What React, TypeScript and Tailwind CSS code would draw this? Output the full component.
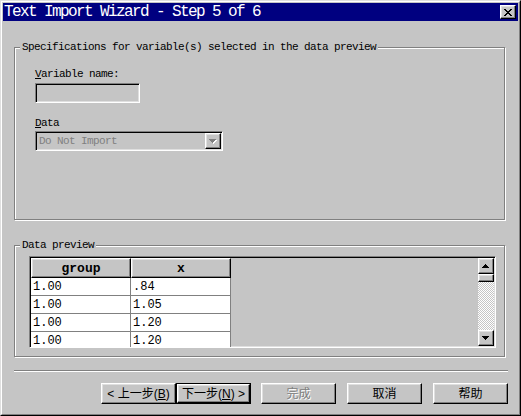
import React from "react";

const mono = "font-['Liberation_Mono',monospace]";
const cjk = "font-['Liberation_Sans','Noto_Sans_CJK_SC',sans-serif]";
const raised =
  "border border-t-white border-l-white border-r-black border-b-black shadow-[inset_-1px_-1px_0_#808080,inset_1px_1px_0_#dfdfdf]";
const sunken =
  "border border-t-[#808080] border-l-[#808080] border-r-white border-b-white shadow-[inset_1px_1px_0_#000,inset_-1px_-1px_0_#dfdfdf]";
const etched = "border border-[#808080] shadow-[1px_1px_0_#fff,inset_1px_1px_0_#fff]";

const rows = [
  ["1.00", ".84"],
  ["1.00", "1.05"],
  ["1.00", "1.20"],
  ["1.00", "1.20"],
];

function Legend({ text }: { text: string }) {
  // group box caption sitting over the etched line
  return (
    <span
      className={`${mono} absolute left-[5px] -top-[7px] px-[2px] bg-[#c5c5c5] text-[11px] leading-[12px] tracking-[-0.6px] text-black whitespace-nowrap`}
    >
      {text}
    </span>
  );
}

function Arrow({ up, disabled }: { up?: boolean; disabled?: boolean }) {
  const pts = up ? "3.5,0 7,4 0,4" : "0,0 7,0 3.5,4";
  return (
    <svg width="8" height="5" viewBox="0 0 8 5" shapeRendering="crispEdges">
      {disabled && <polygon points={pts} fill="#fff" transform="translate(1,1)" />}
      <polygon points={pts} fill={disabled ? "#808080" : "#000"} />
    </svg>
  );
}

function Btn({
  children,
  disabled,
  isDefault,
  className = "",
}: {
  children: React.ReactNode;
  disabled?: boolean;
  isDefault?: boolean;
  className?: string;
}) {
  const label = (
    <span
      className={`${cjk} text-[12px] leading-none ${
        disabled ? "text-[#808080] [text-shadow:1px_1px_0_#fff]" : "text-black"
      }`}
    >
      {children}
    </span>
  );
  if (isDefault) {
    return (
      <div className={`w-[75px] h-[21px] border border-black ${className}`}>
        <div className={`h-full flex items-center justify-center ${raised}`}>{label}</div>
      </div>
    );
  }
  return (
    <div className={`w-[75px] h-[21px] flex items-center justify-center ${raised} ${className}`}>
      {label}
    </div>
  );
}

export default function App() {
  return (
    <div className="w-[521px] h-[416px] bg-[#c5c5c5] border border-t-[#dfdfdf] border-l-[#dfdfdf] border-r-black border-b-black">
      <div className="h-full flex flex-col p-px border border-t-white border-l-white border-r-[#808080] border-b-[#808080]">
        {/* title bar */}
        <div className="h-[18px] shrink-0 bg-[#000080] flex items-center justify-between pl-px pr-[2px]">
          <span className={`${mono} text-white text-[16px] leading-none tracking-[-1.6px] whitespace-nowrap`}>
            Text Import Wizard - Step 5 of 6
          </span>
          <div className={`w-[16px] h-[14px] flex items-center justify-center bg-[#c5c5c5] ${raised}`}>
            <svg width="8" height="7" viewBox="0 0 8 7" shapeRendering="crispEdges">
              <path
                fill="#000"
                d="M0 0h2v1H0zM6 0h2v1H6zM1 1h2v1H1zM5 1h2v1H5zM2 2h4v1H2zM3 3h2v1H3zM2 4h4v1H2zM1 5h2v1H1zM5 5h2v1H5zM0 6h2v1H0zM6 6h2v1H6z"
              />
            </svg>
          </div>
        </div>

        <div className="flex flex-col pl-[11px]">
          {/* specifications group */}
          <div className={`relative mt-[26px] w-[491px] h-[173px] pt-[20px] pl-[20px] ${etched}`}>
            <Legend text="Specifications for variable(s) selected in the data preview" />
            <div className={`${mono} text-[11px] leading-[12px] h-[12px] tracking-[-0.6px] text-black`}>
              <span className="underline">V</span>ariable name:
            </div>
            <div className={`mt-[3px] w-[105px] h-[20px] ${sunken}`} />
            <div className={`${mono} mt-[14px] text-[11px] leading-[12px] h-[12px] tracking-[-0.6px] text-black`}>
              <span className="underline">D</span>ata
            </div>
            <div className={`mt-[2px] w-[188px] h-[20px] p-px flex ${sunken}`}>
              <span
                className={`${mono} flex-1 pl-[2px] flex items-center text-[11px] tracking-[-0.6px] text-[#808080]`}
              >
                Do Not Import
              </span>
              <div className={`w-[16px] h-[16px] flex items-center justify-center ${raised}`}>
                <Arrow disabled />
              </div>
            </div>
          </div>

          {/* data preview group */}
          <div className={`relative mt-[25px] w-[491px] h-[112px] pt-[10px] pl-[14px] ${etched}`}>
            <Legend text="Data preview" />
            <div className={`w-[467px] h-[92px] p-px flex overflow-hidden ${sunken}`}>
              <div className="w-[200px] flex flex-col">
                <div className="flex h-[20px] shrink-0">
                  {["group", "x"].map((h) => (
                    <div
                      key={h}
                      className={`w-[100px] flex items-center justify-center bg-[#c5c5c5] ${raised}`}
                    >
                      <span className={`${mono} font-bold text-[13px] leading-none text-black`}>{h}</span>
                    </div>
                  ))}
                </div>
                {rows.map((r, i) => (
                  <div key={i} className="flex h-[18px] shrink-0 bg-white">
                    {r.map((c, j) => (
                      <div
                        key={j}
                        className={`${mono} w-[100px] pl-[2px] flex items-center border-r border-b border-[#808080] text-[12px] leading-none text-black`}
                      >
                        {c}
                      </div>
                    ))}
                  </div>
                ))}
              </div>
              <div className="flex-1" />
              {/* vertical scrollbar */}
              <div className="w-[16px] flex flex-col">
                <div className={`h-[16px] flex items-center justify-center ${raised}`}>
                  <Arrow up />
                </div>
                <div className={`h-[8px] ${raised}`} />
                <div className="flex-1 bg-[repeating-conic-gradient(#fff_0_25%,#c5c5c5_0_50%)] bg-[length:2px_2px]" />
                <div className={`h-[16px] flex items-center justify-center ${raised}`}>
                  <Arrow />
                </div>
              </div>
            </div>
          </div>

          {/* separator */}
          <div className="mt-[13px] w-[494px] h-[2px] border-t border-t-[#808080] border-b border-b-white" />

          {/* buttons */}
          <div className="mt-[11px] flex justify-end pr-[10px]">
            <Btn>
              &lt; 上一步(<span className="underline">B</span>)
            </Btn>
            <Btn isDefault className="mr-[10px]">
              下一步(<span className="underline">N</span>) &gt;
            </Btn>
            <Btn disabled className="mr-[11px]">
              完成
            </Btn>
            <Btn className="mr-[11px]">取消</Btn>
            <Btn>帮助</Btn>
          </div>
        </div>
      </div>
    </div>
  );
}
